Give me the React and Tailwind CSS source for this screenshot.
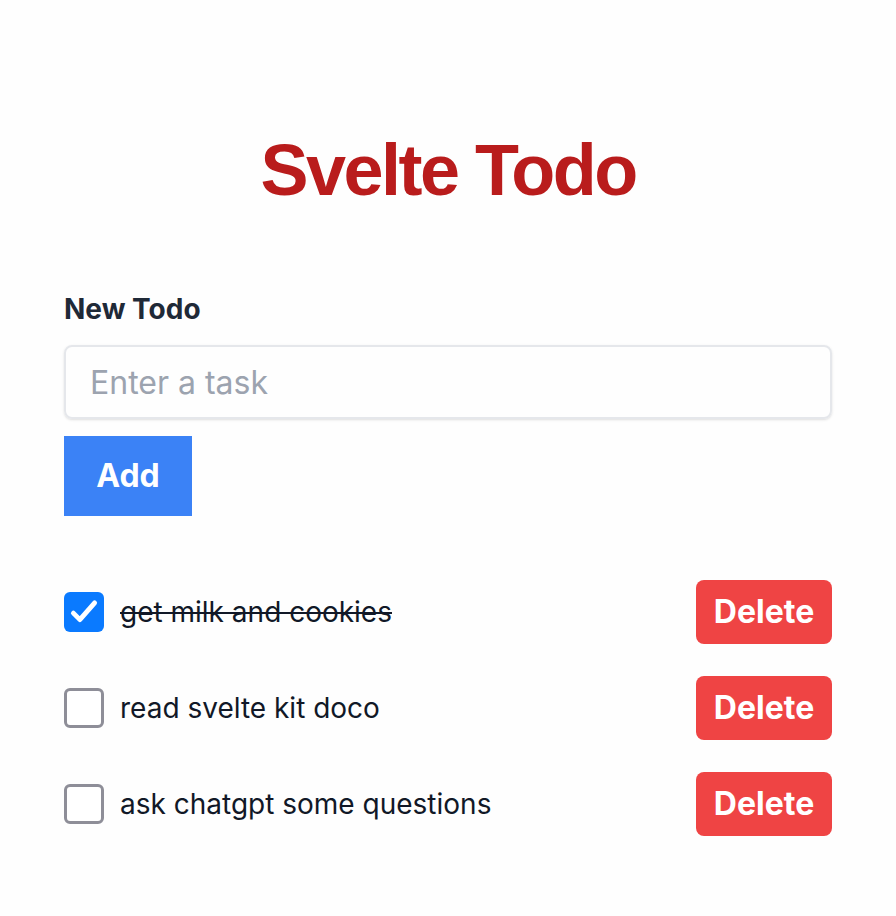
import { useState } from "react";

const initial = [
  { id: 1, text: "get milk and cookies", done: true },
  { id: 2, text: "read svelte kit doco", done: false },
  { id: 3, text: "ask chatgpt some questions", done: false },
];

function Checkbox({ checked, onChange }) {
  return (
    <button
      onClick={onChange}
      className={
        checked
          ? "w-10 h-10 rounded-[6px] bg-[#0a7aff] flex items-center justify-center shrink-0"
          : "w-10 h-10 rounded-[6px] border-[3px] border-[#8e8e98] bg-white shrink-0"
      }
    >
      {checked && (
        <svg width="34" height="34" viewBox="0 0 24 24" fill="none" stroke="white" strokeWidth="3.4" strokeLinecap="round" strokeLinejoin="round">
          <path d="M4.5 12.8l4.6 4.6L19.5 5.5"></path>
        </svg>
      )}
    </button>
  );
}

export default function App() {
  const [todos, setTodos] = useState(initial);
  const [task, setTask] = useState("");

  const addTodo = () => {
    if (!task.trim()) return;
    setTodos([...todos, { id: Date.now(), text: task, done: false }]);
    setTask("");
  };

  return (
    <div className="min-h-screen bg-[#fefefe] font-['Inter',sans-serif]">
      <div className="w-[768px] mx-auto pt-[134px]">
        {/* Title */}
        <h1 className="text-center text-[72px] leading-[72px] font-bold tracking-[-2.5px] text-[#b91c1c] font-['Liberation_Sans',Arial,sans-serif]">
          Svelte Todo
        </h1>

        {/* New todo form */}
        <label className="block mt-[83px] text-[28px] leading-[40px] font-bold text-[#1f2937]">
          New Todo
        </label>
        <input
          value={task}
          onChange={(e) => setTask(e.target.value)}
          placeholder="Enter a task"
          className="mt-4 w-full h-[74px] px-6 rounded-lg border-2 border-[#e5e7eb] shadow-sm text-[32px] text-[#111827] placeholder:text-[#9ca3af] outline-none"
        />
        <button
          onClick={addTodo}
          className="mt-[17px] w-32 h-20 bg-[#3b82f6] text-white text-[32px] font-bold"
        >
          Add
        </button>

        {/* List */}
        <ul className="mt-16 flex flex-col gap-8">
          {todos.map((t) => (
            <li key={t.id} className="flex items-center h-16">
              <Checkbox
                checked={t.done}
                onChange={() =>
                  setTodos(todos.map((x) => (x.id === t.id ? { ...x, done: !x.done } : x)))
                }
              />
              <span className={"ml-4 flex-1 text-[28px] text-[#111827] " + (t.done ? "line-through" : "")}>
                {t.text}
              </span>
              <button
                onClick={() => setTodos(todos.filter((x) => x.id !== t.id))}
                className="w-[136px] h-16 rounded-lg bg-[#ef4444] text-white text-[32px] font-bold"
              >
                Delete
              </button>
            </li>
          ))}
        </ul>
      </div>
    </div>
  );
}
